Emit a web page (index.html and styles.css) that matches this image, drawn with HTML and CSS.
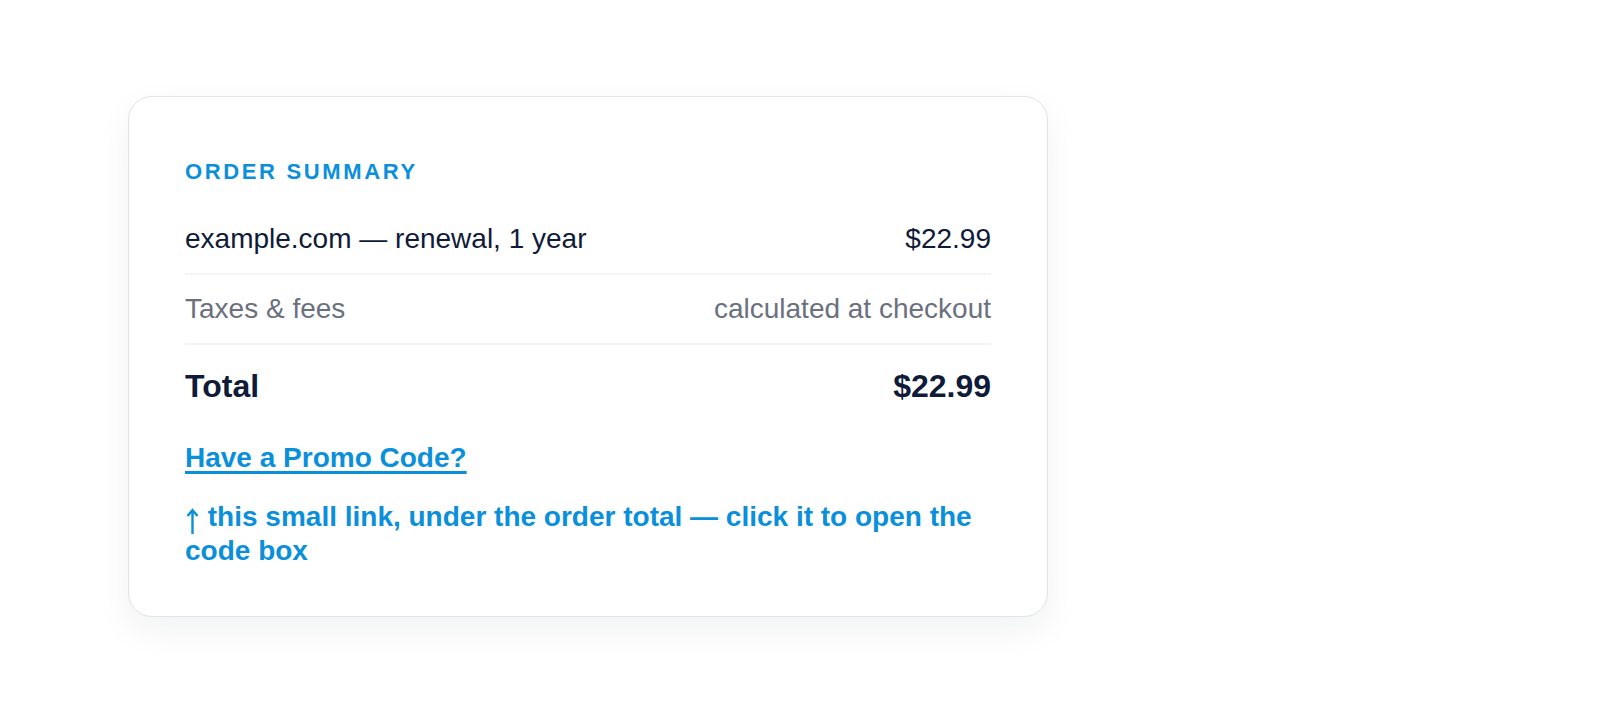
FILE: index.html
```html
<!DOCTYPE html>
<html lang="en">
<head>
<meta charset="utf-8">
<title>Order summary</title>
<link rel="stylesheet" href="styles.css">
</head>
<body>
  <main class="page">
    <section class="summary">
      <h2 class="summary-title">Order summary</h2>
      <div class="line">
        <span>example.com — renewal, 1 year</span>
        <span>$22.99</span>
      </div>
      <div class="line line-muted">
        <span>Taxes &amp; fees</span>
        <span>calculated at checkout</span>
      </div>
      <div class="line line-total">
        <span>Total</span>
        <span>$22.99</span>
      </div>
      <p class="promo"><a href="#" class="promo-link">Have a Promo Code?</a></p>
      <p class="hint"><svg class="hint-arrow" viewBox="0 0 13 26" aria-hidden="true"><path d="M6.5 2.5V26M1.5 8l5-6 5 6" fill="none" stroke="currentColor" stroke-width="2.4" stroke-linecap="butt" stroke-linejoin="miter"/></svg> this small link, under the order total — click it to open the code box</p>
    </section>
  </main>
</body>
</html>
```
FILE: styles.css
```css
* {
  box-sizing: border-box;
}

html,
body {
  margin: 0;
  background: #ffffff;
}

body {
  font-family: "Liberation Sans", Arial, Helvetica, sans-serif;
  color: #0f1b38;
}

.page {
  padding: 96px 128px;
}

.summary {
  width: 920px;
  padding: 62px 56px 49px;
  background: #ffffff;
  border: 1px solid #e2e3e6;
  border-radius: 24px;
  box-shadow: 0 14px 36px rgba(15, 27, 56, 0.06);
}

.summary-title {
  margin: 0 0 20px;
  font-size: 22px;
  line-height: 1.2;
  font-weight: 700;
  letter-spacing: 0.12em;
  text-transform: uppercase;
  color: #0a90db;
}

.line {
  display: flex;
  justify-content: space-between;
  align-items: baseline;
  padding: 17px 0;
  font-size: 28px;
  line-height: 1.2;
  border-bottom: 2px solid #f3f4f6;
}

.line-muted {
  color: #6b7080;
}

.line-total {
  padding: 22px 0 0;
  font-size: 32px;
  font-weight: 700;
  border-bottom: none;
}

.promo {
  margin: 36px 0 0;
  font-size: 28px;
  line-height: 1.2;
  font-weight: 700;
}

.promo-link {
  color: #0a90db;
  text-decoration: underline;
  text-decoration-thickness: 3px;
  text-underline-offset: 4px;
}

.hint {
  margin: 25px 0 0;
  font-size: 28px;
  line-height: 1.2;
  font-weight: 700;
  color: #0a90db;
}

.hint-arrow {
  display: inline-block;
  width: 13px;
  height: 26px;
  margin-left: 1px;
  margin-right: 1px;
  vertical-align: -8px;
}
```
